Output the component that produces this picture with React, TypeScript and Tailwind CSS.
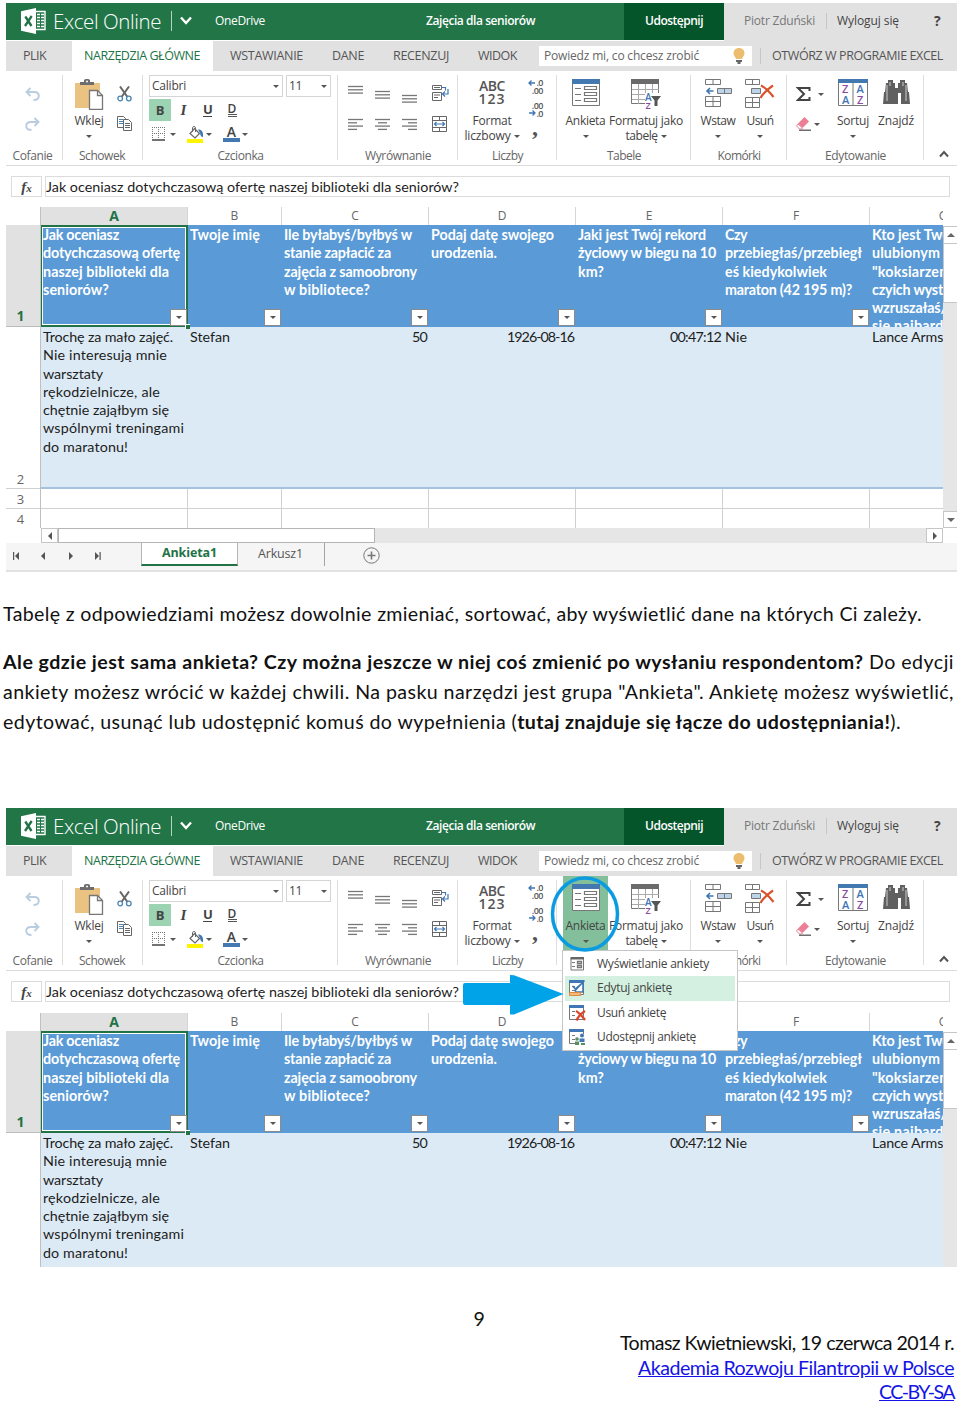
import { useLayoutEffect, useRef, useState, type ReactNode } from "react";
import { clsx } from "clsx";

interface FitProps {
  w: number;
  className?: string;
  children: ReactNode;
}

// Tracks the text so that it takes up exactly w pixels
function Fit({ w, className, children }: FitProps) {
  const ref = useRef<HTMLSpanElement>(null);
  const [spacing, setSpacing] = useState(0);

  useLayoutEffect(() => {
    const el = ref.current;
    if (!el) return;
    el.style.letterSpacing = "0px";
    const natural = el.getBoundingClientRect().width;
    const next = (w - natural) / (el.textContent?.length || 1);
    el.style.letterSpacing = `${next}px`;
    setSpacing(next);
  }, [w]);

  return (
    <span
      ref={ref}
      className={clsx("inline-block shrink-0 whitespace-nowrap", className)}
      style={{ letterSpacing: `${spacing}px` }}
    >
      {children}
    </span>
  );
}

function Caret({ className }: { className?: string }) {
  return (
    <svg className={clsx("h-[3px] w-[6px] shrink-0", className)} viewBox="0 0 6 3" fill="#555">
      <path d="M0 0h6L3 3z" />
    </svg>
  );
}

/* ---------- icons ---------- */

function ExcelLogo() {
  return (
    <svg className="h-[26px] w-[25px] shrink-0" viewBox="0 0 25 26">
      <path d="M0 3.2 15 0v26L0 22.8z" fill="#fff" />
      <path d="M15 3.500h9v18h-9" fill="none" stroke="#fff" strokeWidth="1.4" />
      <path d="M16 6.500h7M16 9.500h7M16 12.500h7M16 15.500h7M16 18.500h7" stroke="#fff" strokeWidth="1.7" strokeDasharray="3 1" />
      <path d="M4.300 8.500 10.500 18M10.700 8 4 18" stroke="#217346" strokeWidth="2.300" />
    </svg>
  );
}

function UndoIcon({ flip }: { flip?: boolean }) {
  return (
    <svg className={clsx("h-[14px] w-[15px]", flip && "-scale-x-100")} viewBox="0 0 15 14" fill="none" stroke="#b9cde0" strokeWidth="1.9">
      <path d="M5.500 1 1.500 5l4 4M1.500 5H9c3 0 4.800 1.500 4.800 4S12 13 8.500 13" />
    </svg>
  );
}

function PasteIcon() {
  return (
    <svg className="h-[31px] w-[29px]" viewBox="0 0 29 31">
      <path d="M0 4h25v25H0z" fill="#eac282" />
      <path d="M5 6V3h4V1.500C9 .5 10 0 12 0s3 .5 3 1.500V3h4v3z" fill="#6d6d6d" />
      <circle cx="12" cy="2.500" r="1" fill="#fff" />
      <path d="M14.500 11.500h8l5 5v14h-13z" fill="#fff" stroke="#777" strokeWidth="1.300" />
      <path d="M22.500 11.500v5h5" fill="none" stroke="#777" strokeWidth="1.300" />
    </svg>
  );
}

function CutIcon() {
  return (
    <svg className="h-[16px] w-[15px]" viewBox="0 0 15 16" fill="none">
      <path d="M3 .5 10.500 11M12 .5 4.500 11" stroke="#666" strokeWidth="2" />
      <circle cx="3.200" cy="12.500" r="2.300" stroke="#4a86b5" strokeWidth="1.300" />
      <circle cx="11.800" cy="12.500" r="2.300" stroke="#4a86b5" strokeWidth="1.300" />
    </svg>
  );
}

function CopyIcon() {
  return (
    <svg className="h-[15px] w-[15px]" viewBox="0 0 15 15" fill="#fff" stroke="#666">
      <path d="M.5.5h6l2 2v9h-8z" />
      <path d="M2 3.500h4M2 5.500h4M2 7.500h4" stroke="#4a86b5" />
      <path d="M6.500 3.500h5l3 3v8h-8z" />
      <path d="M8 7.500h5M8 9.500h5M8 11.500h5" stroke="#666" />
    </svg>
  );
}

function BordersIcon() {
  return (
    <svg className="h-[14px] w-[14px]" viewBox="0 0 14 14" fill="none" stroke="#777">
      <path d="M.5 0v12M6.500 0v12M12.500 0v12M0 .5h13M0 6.500h13" strokeDasharray="1 1" />
      <path d="M0 13h13" stroke="#444" strokeWidth="1.500" />
    </svg>
  );
}

function FillIcon() {
  return (
    <svg className="h-[17px] w-[17px]" viewBox="0 0 17 17" fill="none">
      <path d="M7.500 2.500 12.500 7.500 8 12 3 7.500z" fill="#fff" stroke="#666" strokeWidth="1.200" />
      <path d="M5.500 6V1.500C5.500.3 8.500.3 8.500 1.500V6" stroke="#666" />
      <path d="M11 3.500c4 0 5.500 2.500 5 7.500-2 0-2.500-1.500-3-4z" fill="#3f76b3" />
      <path d="M0 13h16v4H0z" fill="#fdf500" />
    </svg>
  );
}

function AlignIcon({ rows, className }: { rows: [number, number][]; className?: string }) {
  return (
    <svg className={clsx("h-[13px] w-[15px]", className)} viewBox="0 0 15 13" stroke="#777" strokeWidth="1.300">
      {rows.map(([from, to], i) => (
        <path key={i} d={`M${from} ${i * 3.3 + 1.5}H${to}`} />
      ))}
    </svg>
  );
}

function WrapIcon() {
  return (
    <svg className="h-[16px] w-[17px]" viewBox="0 0 17 16" fill="none" stroke="#666">
      <path d="M.5.5h9v4h-9zM.5 7.500h9v8h-9zM2 2.500h6M2 10h6M2 12.500h4" />
      <path d="M9.500 2.500h4v3M16 4v5h-5M13 6.500 10.500 9l2.500 2.500" stroke="#3f76b3" strokeWidth="1.200" />
    </svg>
  );
}

function MergeIcon() {
  return (
    <svg className="h-[16px] w-[15px]" viewBox="0 0 15 16" fill="none" stroke="#666">
      <path d="M.5.5h14v15H.5zM.5 4.500h14M.5 11.500h14M7.500.5v4M7.500 11.500v4" />
      <path d="M2.500 8h10M4.500 6l-2 2 2 2M10.500 6l2 2-2 2" stroke="#3f76b3" strokeWidth="1.200" />
    </svg>
  );
}

function DecimalIcon({ less }: { less?: boolean }) {
  return (
    <div className="flex h-[15px] w-[16px] flex-col text-right font-['Open_Sans'] text-[9px] leading-[7px] font-semibold tracking-[-0.5px] text-[#555]">
      <div className="flex h-[7px] items-center justify-end">
        {!less && <BlueArrow />}
        {less ? ".00" : ".0"}
      </div>
      <div className="flex h-[8px] items-center justify-end">
        {less && <BlueArrow flip />}
        {less ? ".0" : ".00"}
      </div>
    </div>
  );
}

function BlueArrow({ flip }: { flip?: boolean }) {
  return (
    <svg className={clsx("h-[6px] w-[8px] shrink-0", flip && "-scale-x-100")} viewBox="0 0 8 6" fill="none" stroke="#3f76b3" strokeWidth="1.300">
      <path d="M1 3h6M3.500.5 1 3l2.500 2.500" />
    </svg>
  );
}

function SurveyIcon() {
  return (
    <svg className="h-[27px] w-[28px]" viewBox="0 0 28 27" fill="none" stroke="#777">
      <path d="M.5.5h27v26H.5z" fill="#fff" />
      <path d="M0 0h28v5H0z" fill="#4478b0" stroke="none" />
      <path d="M3 9.500h6M3 15.500h6M3 21.500h6" />
      <path d="M12.500 7.500h12v3h-12zM12.500 13.500h12v3h-12zM12.500 19.500h12v3h-12z" strokeWidth="1.200" />
    </svg>
  );
}

function FormatTableIcon() {
  return (
    <svg className="h-[30px] w-[31px]" viewBox="0 0 31 30" fill="none">
      <path d="M.5.5h27v24H.5z" fill="#fff" stroke="#777" />
      <path d="M0 0h28v5H0z" fill="#6b6b6b" />
      <path d="M7.500 5v20M14.500 5v9M21.500 5v9M1 10.500h27M1 15.500h13M1 20.500h13" stroke="#aaa" />
      <path d="M14 14h17v16H14z" fill="#fff" />
      <path d="M20 17h10l-3.500 4.500V27h-3v-5.500z" fill="#555" />
      <text x="14" y="22" className="font-['Open_Sans'] text-[10px] font-semibold" fill="#3f76b3">A</text>
      <text x="14.500" y="30" className="font-['Open_Sans'] text-[9px] font-semibold" fill="#8a4aa0">Z</text>
    </svg>
  );
}

function InsertIcon() {
  return (
    <svg className="h-[29px] w-[27px]" viewBox="0 0 27 29" fill="none" stroke="#777">
      <path d="M.5.5h15v5H.5zM8 .5v5M.5 17.500h15v10H.5zM8 17.500v10M.5 22.500h15" />
      <path d="M12.500 9.500h14v5h-14zM19.500 9.500v5" fill="#bdd3ea" />
      <path d="M1.500 12h7M5 9l-3 3 3 3" stroke="#3f76b3" strokeWidth="1.600" />
    </svg>
  );
}

function DeleteIcon() {
  return (
    <svg className="h-[29px] w-[30px]" viewBox="0 0 30 29" fill="none" stroke="#777">
      <path d="M.5.500h14v5H.5zM7.500.5v5M.5 18.500h14v10H.5zM7.500 18.500v10M.5 23.500h14" />
      <path d="M6.500 9.500h9v5h-9z" fill="#bdd3ea" />
      <path d="M16 6.500c4 2 9 7 12.500 11.500M28 6.500C23 10 18 14 15.500 19" stroke="#d9532c" strokeWidth="2.200" />
    </svg>
  );
}

function EraserIcon() {
  return (
    <svg className="h-[14px] w-[15px]" viewBox="0 0 15 14">
      <path d="M8.500 0 13 4.500 6.500 11 2 6.500z" fill="#ec7f95" />
      <path d="M2 7 .5 9l3 3h2l1-1z" fill="#fff" stroke="#ec7f95" />
      <path d="M3 13.200h12" stroke="#555" strokeWidth="1.300" />
    </svg>
  );
}

function SortIcon() {
  return (
    <svg className="h-[27px] w-[30px]" viewBox="0 0 30 27">
      <path d="M.5.5h29v26H.5zM15 3v24" fill="#fff" stroke="#777" />
      <path d="M0 0h30v4H0z" fill="#4478b0" />
      <g className="font-['Open_Sans'] text-[11px] font-semibold">
        <text x="4" y="14" fill="#8a4aa0">Z</text>
        <text x="4" y="24.500" fill="#3f76b3">A</text>
        <text x="18.500" y="14" fill="#3f76b3">A</text>
        <text x="19" y="24.500" fill="#8a4aa0">Z</text>
      </g>
    </svg>
  );
}

function FindIcon() {
  return (
    <svg className="h-[25px] w-[27px]" viewBox="0 0 27 25" fill="#606060">
      <path d="M5 0h5v3h2v5h3V3h2V0h5v3h2l1 9h1l1 12h-9V13h-3v11H0l1-12h1l1-9h2z" />
      <path d="M4 5v16M23 5v16M7 2v4M20 2v4" stroke="#fff" strokeWidth=".7" />
    </svg>
  );
}

function BulbIcon() {
  return (
    <svg className="h-[16px] w-[12px]" viewBox="0 0 12 16">
      <path d="M6 0c3.300 0 5.500 2.300 5.500 5.300 0 2.700-2 3.700-2.500 5.700H3C2.500 9 .5 8 .5 5.300.5 2.300 2.700 0 6 0z" fill="#ecbd6d" />
      <path d="M3 12h6v2H7.500v2h-3v-2H3z" fill="#666" />
    </svg>
  );
}

function MenuIcon({ kind }: { kind: number }) {
  return (
    <svg className="h-[16px] w-[17px] shrink-0" viewBox="0 0 17 16" fill="none" stroke="#777">
      <path d={kind === 0 ? "M2 2.500h12.500v11.500H2z" : "M.5 2.500h14v12H.5z"} fill="#fff" />
      <path d={kind === 0 ? "M1.500 1h13.500v2.500H1.500z" : "M0 0h15v3H0z"} fill={kind === 0 ? "#666" : "#3f76b3"} stroke="none" />
      <path d="M3 6.500h3M3 10.500h3" />
      {kind === 0 && <path d="M8.500 5.500h4v2h-4zM8.500 9.500h4v2h-4z" strokeWidth="1.300" />}
      {kind === 1 && (
        <>
          <path d="M3.500 6 7 9.500 15.500.5M6 11.500l1-3 7-6v9.500H6" stroke="#3f76b3" strokeWidth="1.600" />
          <path d="M.5 12.500h11v3H.5z" fill="#f3b880" stroke="#e08a3c" />
        </>
      )}
      {kind === 2 && <path d="M7 6c3 1.500 6 5 9 9M16 6c-4 2.500-7 5.500-8.500 9.500" stroke="#d9472c" strokeWidth="2.300" />}
      {kind === 3 && (
        <>
          <path d="M6.500 5H17v11H6.500z" fill="#fff" stroke="none" />
          <circle cx="13" cy="6.500" r="2" fill="#3f76b3" stroke="none" />
          <path d="M10.500 13V9.500h5V13z" fill="#3f76b3" stroke="none" />
          <circle cx="8" cy="10" r="1.800" fill="#55905f" stroke="none" />
          <path d="M6 12.500h4V16H6zM12 14h4v2h-4z" fill="#55905f" stroke="none" />
        </>
      )}
    </svg>
  );
}

/* ---------- ribbon ---------- */

function Group({ label, labelW, className, children }: { label: string; labelW: number; className: string; children: ReactNode }) {
  return (
    <div className={clsx("flex h-[94px] shrink-0 flex-col", className)}>
      <div className="flex h-[77px] w-full">
        {children}
        <div className="mt-[4px] ml-auto h-[85px] w-px shrink-0 bg-[#dedede]" />
      </div>
      <div className="text-center leading-[16px] text-[#666]">
        <Fit w={labelW}>{label}</Fit>
      </div>
    </div>
  );
}

interface BigButtonProps {
  icon: ReactNode;
  label: string;
  labelW: number;
  second?: string;
  secondW?: number;
  noCaret?: boolean;
  className?: string;
}

function BigButton({ icon, label, labelW, second, secondW, noCaret, className }: BigButtonProps) {
  return (
    <div className={clsx("flex h-[78px] shrink-0 flex-col items-center pt-[8px]", className)}>
      <div className="flex h-[34px] shrink-0 items-start justify-center">{icon}</div>
      <div className="h-[15px] shrink-0 leading-[15px]">
        <Fit w={labelW}>{label}</Fit>
      </div>
      <div className="flex h-[15px] shrink-0 items-center gap-[3px] leading-[15px]">
        {second && <Fit w={secondW ?? 0}>{second}</Fit>}
        {!noCaret && <Caret className="mt-px" />}
      </div>
    </div>
  );
}

function Ribbon({ open }: { open?: boolean }) {
  return (
    <div className="flex h-[95px] border-b border-[#dcdcdc] text-[#444]">
      <Group label="Cofanie" labelW={40} className="w-[57px] [&>div:last-child]:pr-[4px]">
        <div className="flex flex-col gap-[16px] pt-[16px] pl-[19px]">
          <UndoIcon />
          <UndoIcon flip />
        </div>
      </Group>
      <Group label="Schowek" labelW={46} className="w-[80px] [&>div:last-child]:pr-[2px]">
        <BigButton icon={<PasteIcon />} label="Wklej" labelW={29} className="w-[52px]" />
        <div className="flex flex-col gap-[14px] pt-[15px] pl-[2px]">
          <CutIcon />
          <CopyIcon />
        </div>
      </Group>
      <Group label="Czcionka" labelW={46} className="w-[195px]">
        <div className="flex flex-col pt-[4px] pl-[6px]">
          <div className="flex gap-[3px]">
            <div className="flex h-[22px] w-[134px] items-center justify-between border border-[#d5d5d5] pr-[3px] pl-[2px]">
              <Fit w={34}>Calibri</Fit>
              <Caret />
            </div>
            <div className="flex h-[22px] w-[45px] items-center justify-between border border-[#d5d5d5] pr-[3px] pl-[2px]">
              <Fit w={13}>11</Fit>
              <Caret />
            </div>
          </div>
          <div className="mt-[2px] flex h-[22px] items-center text-[13px] leading-[18px] font-bold text-[#444]">
            <div className="flex h-[22px] w-[22px] items-center justify-center bg-[#9bd3b3]">B</div>
            <div className="w-[25px] text-center font-['Liberation_Serif'] text-[15px] italic">I</div>
            <div className="flex w-[23px] justify-center">
              <span className="h-[14px] w-[9px] border-b border-[#444] text-center leading-[13px]">U</span>
            </div>
            <div className="flex w-[26px] justify-center">
              <span className="h-[14px] w-[9px] border-b-3 border-double border-[#555] text-center text-[12px] leading-[11px] font-semibold">D</span>
            </div>
          </div>
          <div className="mt-[3px] flex h-[20px] items-center pl-[3px]">
            <BordersIcon />
            <Caret className="ml-[4px]" />
            <div className="ml-[11px]">
              <FillIcon />
            </div>
            <Caret className="ml-[2px]" />
            <div className="ml-[11px] flex w-[17px] flex-col items-center">
              <span className="text-[14px] leading-[12px] font-semibold">A</span>
              <div className="h-[4px] w-full bg-[#4478b0]" />
            </div>
            <Caret className="ml-[2px]" />
          </div>
        </div>
      </Group>
      <Group label="Wyrównanie" labelW={66} className="w-[120px]">
        <div className="grid h-[66px] grid-cols-[27px_27px_30px_17px] grid-rows-[31px_31px] pt-[14px] pl-[10px]">
          <AlignIcon rows={[[0, 15], [0, 15], [0, 15]]} />
          <AlignIcon rows={[[0, 15], [0, 15], [0, 15]]} className="mt-[5px]" />
          <AlignIcon rows={[[0, 15], [0, 15], [0, 15]]} className="mt-[9px]" />
          <WrapIcon />
          <AlignIcon rows={[[0, 15], [0, 9], [0, 15], [0, 9]]} className="mt-[2px]" />
          <AlignIcon rows={[[0, 15], [3, 12], [0, 15], [3, 12]]} className="mt-[2px]" />
          <AlignIcon rows={[[0, 15], [6, 15], [0, 15], [6, 15]]} className="mt-[2px]" />
          <MergeIcon />
        </div>
      </Group>
      <Group label="Liczby" labelW={31} className="w-[99px]">
        <BigButton
          icon={
            <div className="flex flex-col items-center pt-px text-[14px] leading-[12.500px] font-semibold text-[#555]">
              <Fit w={26}>ABC</Fit>
              <Fit w={27}>123</Fit>
            </div>
          }
          label="Format"
          labelW={39}
          second="liczbowy"
          secondW={46}
          className="w-[68px]"
        />
        <div className="flex flex-col items-center pt-[8px] pl-[1px]">
          <DecimalIcon />
          <div className="mt-[8px]">
            <DecimalIcon less />
          </div>
          <div className="mt-[-1px] font-['Liberation_Serif'] text-[24px] leading-[22px] font-bold text-[#555]">,</div>
        </div>
      </Group>
      <Group label="Tabele" labelW={34} className="w-[134px]">
        <BigButton
          icon={<SurveyIcon />}
          label="Ankieta"
          labelW={40}
          className={clsx("ml-[6px] w-[45px]", open && "bg-[#84bf9c]")}
        />
        <BigButton icon={<FormatTableIcon />} label="Formatuj jako" labelW={74} second="tabelę" secondW={32} className="w-[76px]" />
      </Group>
      <Group label="Komórki" labelW={43} className="w-[96px]">
        <BigButton icon={<InsertIcon />} label="Wstaw" labelW={35} className="ml-[7px] w-[40px]" />
        <BigButton icon={<DeleteIcon />} label="Usuń" labelW={27} className="ml-[3px] w-[38px]" />
      </Group>
      <Group label="Edytowanie" labelW={61} className="w-[137px]">
        <div className="flex flex-col pt-[13px] pl-[9px]">
          <div className="flex h-[20px] items-center gap-[7px]">
            <svg className="h-[14px] w-[15px]" viewBox="0 0 15 14" fill="none" stroke="#444" strokeWidth="2">
              <path d="M13.500 4V1H2l6 6-6 6h11.500v-3" />
            </svg>
            <Caret />
          </div>
          <div className="mt-[10px] flex h-[20px] items-center gap-[3px]">
            <EraserIcon />
            <Caret />
          </div>
        </div>
        <BigButton icon={<SortIcon />} label="Sortuj" labelW={32} className="ml-[7px] w-[44px]" />
        <BigButton icon={<div className="pt-px"><FindIcon /></div>} label="Znajdź" labelW={36} noCaret className="w-[42px]" />
      </Group>
      <svg className="mt-[79px] ml-[15px] h-[8px] w-[10px]" viewBox="0 0 10 8" fill="none" stroke="#555" strokeWidth="2">
        <path d="M1 6.500 5 2l4 4.500" />
      </svg>
    </div>
  );
}

function TopBars() {
  return (
    <>
      <div className="flex h-[38px] bg-[#e1e1e1]">
        <div className="flex h-full w-[718px] items-center border-b border-white bg-[#217547] pb-[2px] text-white">
          <div className="ml-[15px]">
            <ExcelLogo />
          </div>
          <Fit w={108} className="ml-[7px] text-[20.500px] leading-[36px] font-light">Excel Online</Fit>
          <div className="ml-[10px] h-[20px] w-px bg-[#b5d3c2]" />
          <svg className="ml-[8px] h-[9px] w-[12px]" viewBox="0 0 12 9" fill="none" stroke="#fff" strokeWidth="2.400">
            <path d="M1 1.500 6 7l5-5.500" />
          </svg>
          <Fit w={50} className="ml-[23px]">OneDrive</Fit>
          <Fit w={109} className="ml-[161px] font-semibold">Zajęcia dla seniorów</Fit>
          <div className="-mb-[2px] ml-auto flex h-[37px] w-[100px] items-center justify-center bg-[#05552b] pb-[2px]">
            <Fit w={58} className="font-semibold">Udostępnij</Fit>
          </div>
        </div>
        <div className="flex flex-1 items-center pb-[3px] text-[#444]">
          <Fit w={71} className="ml-[20px] text-[#777]">Piotr Zduński</Fit>
          <div className="ml-[11px] h-[16px] w-px bg-[#c6c6c6]" />
          <Fit w={62} className="ml-[10px]">Wyloguj się</Fit>
          <span className="ml-[35px] text-[14px] font-bold">?</span>
        </div>
      </div>
      <div className="flex h-[30px] items-center bg-[#e1e1e1] text-[12.500px] text-[#555]">
        <div className="w-[66px] pl-[17px]">
          <Fit w={23}>PLIK</Fit>
        </div>
        <div className="flex h-full w-[141px] items-center bg-white pl-[12px] text-[#217346]">
          <Fit w={116}>NARZĘDZIA GŁÓWNE</Fit>
        </div>
        <Fit w={73} className="ml-[17px]">WSTAWIANIE</Fit>
        <Fit w={32} className="ml-[29px]">DANE</Fit>
        <Fit w={56} className="ml-[29px]">RECENZUJ</Fit>
        <Fit w={39} className="ml-[29px]">WIDOK</Fit>
        <div className="ml-[22px] flex h-[20px] w-[213px] items-center justify-between bg-white pr-[7px] pl-[5px] text-[12px] text-[#666]">
          <Fit w={155}>Powiedz mi, co chcesz zrobić</Fit>
          <BulbIcon />
        </div>
        <div className="ml-[8px] h-[16px] w-px bg-[#c6c6c6]" />
        <Fit w={171} className="ml-[11px]">OTWÓRZ W PROGRAMIE EXCEL</Fit>
      </div>
    </>
  );
}

/* ---------- grid ---------- */

type Line = [string, number];

interface Column {
  letter: string;
  width: string;
  head: Line[];
}

const COLUMNS: Column[] = [
  { letter: "A", width: "w-[147px]", head: [["Jak oceniasz", 76], ["dotychczasową ofertę", 137], ["naszej biblioteki dla", 126], ["seniorów?", 66]] },
  { letter: "B", width: "w-[94px]", head: [["Twoje imię", 70]] },
  { letter: "C", width: "w-[147px]", head: [["Ile byłabyś/byłbyś w", 128], ["stanie zapłacić za", 107], ["zajęcia z samoobrony", 133], ["w bibliotece?", 86]] },
  { letter: "D", width: "w-[147px]", head: [["Podaj datę swojego", 123], ["urodzenia.", 66]] },
  { letter: "E", width: "w-[147px]", head: [["Jaki jest Twój rekord", 128], ["życiowy w biegu na 10", 138], ["km?", 26]] },
  { letter: "F", width: "w-[147px]", head: [["Czy", 22], ["przebiegłaś/przebiegł", 137], ["eś kiedykolwiek", 102], ["maraton (42 195 m)?", 127]] },
  { letter: "G", width: "w-[147px]", head: [["Kto jest Twoim", 94], ["ulubionym", 68], ["\"koksiarzem\",", 87], ["czyich występach", 108], ["wzruszałaś/eś", 88], ["się najbardziej?", 101]] },
];

const ANSWER: Line[] = [
  ["Trochę za mało zajęć.", 130],
  ["Nie interesują mnie", 124],
  ["warsztaty", 60],
  ["rękodzielnicze, ale", 117],
  ["chętnie zająłbym się", 126],
  ["wspólnymi treningami", 141],
  ["do maratonu!", 85],
];

function FilterButton() {
  return (
    <div className="absolute right-[1px] bottom-[1px] flex h-[17px] w-[17px] items-center justify-center border border-[#8b8b8b] bg-white">
      <Caret />
    </div>
  );
}

function Grid({ short }: { short?: boolean }) {
  return (
    <div className="flex">
      {/* Row numbers */}
      <div className="w-[35px] shrink-0 border-r border-[#c0c0c0] pt-[18px] text-center text-[13px] text-[#666]">
        <div className="flex h-[102px] items-end justify-center border-b border-[#bbb] bg-[#e1e1e1] pr-[5px] text-[14px] font-bold text-[#217346]">1</div>
        {!short && (
          <>
            <div className="flex h-[162px] items-end justify-center border-b border-[#d0d0d0] pr-[5px] leading-[17px]">2</div>
            <div className="h-[20px] border-b border-[#d0d0d0] pr-[5px] leading-[21px]">3</div>
            <div className="h-[19px] pr-[5px] leading-[21px]">4</div>
          </>
        )}
      </div>

      {/* Cells */}
      <div className="relative w-[902px] shrink-0 overflow-hidden font-['Lato']">
        <div className="flex h-[18px] w-[976px] text-center font-['Open_Sans'] text-[12px] leading-[17px] text-[#666]">
          {COLUMNS.map((c) => (
            <div
              key={c.letter}
              className={clsx("shrink-0 border-r border-[#d5d5d5]", c.width, c.letter === "A" && "bg-[#e1e1e1] text-[14px] font-bold text-[#217346]")}
            >
              {c.letter}
            </div>
          ))}
        </div>
        <div className="flex h-[102px] w-[976px] text-[14.300px] leading-[18.300px] font-bold text-white">
          {COLUMNS.map((c) => (
            <div key={c.letter} className={clsx("relative h-[102px] shrink-0 overflow-hidden bg-[#5a9ad6] pt-[1px] pl-[2px]", c.width)}>
              {c.letter === "A" && (
                <div className="absolute inset-0 border-2 border-l border-[#217346]">
                  <div className="h-full w-full border border-white" />
                </div>
              )}
              {c.head.map(([text, w]) => (
                <div key={text} className="relative h-[18.300px]">
                  <Fit w={w}>{text}</Fit>
                </div>
              ))}
              {c.letter !== "G" && <FilterButton />}
            </div>
          ))}
        </div>
        {/* Fill handle of the selected cell */}
        <div className="absolute top-[117px] left-[144px] h-[5px] w-[5px] border-t border-l border-white bg-[#217346]" />
        <div
          className={clsx(
            "flex w-[976px] bg-[#dceaf5] pt-[1px] text-[14.300px] leading-[18.300px] text-[#1d1d1d]",
            short ? "h-[134px]" : "h-[162px] border-b-2 border-[#a5c3de]"
          )}
        >
          <div className="w-[147px] shrink-0 pl-[2px]">
            {ANSWER.map(([text, w]) => (
              <div key={text} className="h-[18.300px]">
                <Fit w={w}>{text}</Fit>
              </div>
            ))}
          </div>
          <div className="w-[94px] shrink-0 pl-[2px]"><Fit w={40}>Stefan</Fit></div>
          <div className="w-[147px] shrink-0 pr-[2px] text-right"><Fit w={15}>50</Fit></div>
          <div className="w-[147px] shrink-0 pr-[2px] text-right"><Fit w={67}>1926-08-16</Fit></div>
          <div className="w-[147px] shrink-0 pr-[2px] text-right"><Fit w={51}>00:47:12</Fit></div>
          <div className="w-[147px] shrink-0 pl-[2px]"><Fit w={22}>Nie</Fit></div>
          <div className="w-[147px] shrink-0 pl-[2px]"><Fit w={104}>Lance Armstrong</Fit></div>
        </div>
        {!short &&
          ["h-[20px] border-b border-[#d0d0d0]", "h-[19px]"].map((row) => (
            <div key={row} className={clsx("flex w-[976px]", row)}>
              {COLUMNS.map((c) => (
                <div key={c.letter} className={clsx("shrink-0 border-r border-[#d0d0d0]", c.width)} />
              ))}
            </div>
          ))}
      </div>

      {/* Vertical scrollbar */}
      <div className="flex flex-1 flex-col pt-[19px]">
        <div className="flex h-[18px] items-center justify-center border border-r-0 border-[#c6c6c6]">
          <svg className="h-[4px] w-[8px]" viewBox="0 0 8 4" fill="#666"><path d="M0 4h8L4 0z" /></svg>
        </div>
        <div className="h-[58px] border-l border-[#c6c6c6]" />
        <div className="flex-1 border-t border-[#c6c6c6] bg-[#e6e6e6]" />
        {!short && (
          <div className="flex h-[17px] items-center justify-center border border-r-0 border-[#c6c6c6]">
            <svg className="h-[4px] w-[8px]" viewBox="0 0 8 4" fill="#666"><path d="M0 0h8L4 4z" /></svg>
          </div>
        )}
      </div>
    </div>
  );
}

function SheetTabs() {
  return (
    <>
      <div className="flex h-[15px] pl-[35px]">
        <div className="flex w-[902px] justify-between bg-[#e6e6e6]">
          <div className="flex">
            <div className="flex w-[17px] items-center justify-center border border-[#c6c6c6] bg-white">
              <svg className="h-[8px] w-[4px]" viewBox="0 0 4 8" fill="#555"><path d="M4 0v8L0 4z" /></svg>
            </div>
            <div className="w-[317px] border border-[#b5b5b5] bg-white" />
          </div>
          <div className="flex w-[17px] items-center justify-center border border-[#c6c6c6] bg-white">
            <svg className="h-[8px] w-[4px]" viewBox="0 0 4 8" fill="#555"><path d="M0 0v8l4-4z" /></svg>
          </div>
        </div>
      </div>
      <div className="flex h-[29px] border-b-2 border-[#e2e2e2] bg-[#f5f5f5]">
        <svg className="mt-[9px] ml-[6px] h-[8px] w-[90px]" viewBox="0 0 90 8" fill="#555">
          <path d="M1 0h1.200v8H1zM7 0v8L3 4zM33 0v8l-4-4zM57 0v8l4-4zM83 0v8l4-4zM87.500 0h1.200v8h-1.200z" />
        </svg>
        <div className="ml-[39px] flex h-[23px] w-[97px] items-center justify-center border-x border-b-2 border-x-[#b5b5b5] border-b-[#217346] bg-white text-[12.500px] font-bold text-[#217346]">
          <Fit w={55}>Ankieta1</Fit>
        </div>
        <div className="flex h-[23px] w-[87px] items-center border-r border-[#a5a5a5] pl-[20px] text-[12.500px] text-[#555]">
          <Fit w={45}>Arkusz1</Fit>
        </div>
        <svg className="mt-[4px] ml-[38px] h-[17px] w-[17px]" viewBox="0 0 17 17" fill="none" stroke="#777">
          <circle cx="8.500" cy="8.500" r="7.700" />
          <path d="M4.500 8.500h8M8.500 4.500v8" strokeWidth="1.600" />
        </svg>
      </div>
    </>
  );
}

const MENU: Line[] = [
  ["Wyświetlanie ankiety", 112],
  ["Edytuj ankietę", 75],
  ["Usuń ankietę", 69],
  ["Udostępnij ankietę", 99],
];

function SurveyMenu() {
  return (
    <>
      <div className="absolute top-[142px] left-[556px] h-[101px] w-[176px] border border-[#c6c6c6] bg-white px-[2px] pt-[1px]">
        {MENU.map(([text, w], i) => (
          <div key={text} className={clsx("flex h-[24.300px] items-center gap-[11px] pl-[4px] text-[#444]", i === 1 && "bg-[#d3f0e0]")}>
            <MenuIcon kind={i} />
            <Fit w={w}>{text}</Fit>
          </div>
        ))}
      </div>
      <svg className="absolute top-[68px] left-[544px] h-[77px] w-[70px]" viewBox="0 0 70 77" fill="none">
        <ellipse cx="35" cy="38" rx="32.500" ry="36" stroke="#0b9be0" strokeWidth="3.500" />
      </svg>
      <svg className="absolute top-[167px] left-[457px] h-[40px] w-[101px]" viewBox="0 0 101 40" fill="#00a2e8">
        <path d="M2 8h45V0l4 .3L100.500 19 51 39.500h-4V30H2a2 2 0 0 1-2-2V10a2 2 0 0 1 2-2z" />
      </svg>
    </>
  );
}

function ExcelWindow({ menu }: { menu?: boolean }) {
  return (
    <div className="relative ml-[6px] w-[951px] font-['Open_Sans'] text-[12px]">
      <TopBars />
      <Ribbon open={menu} />
      <div className={clsx("flex gap-[3px] pt-[10px] pl-[5px]", menu ? "h-[42px]" : "h-[41px]")}>
        <div className="flex h-[21px] w-[31px] items-center justify-center border border-[#dcdcdc] font-['Liberation_Serif'] text-[15px] leading-[18px] font-bold text-[#444] italic">
          f<span className="pt-[3px] text-[11px]">x</span>
        </div>
        <div className="flex h-[21px] w-[905px] items-center border border-[#dcdcdc] font-['Lato'] text-[14.300px] text-[#1d1d1d]">
          <Fit w={413}>Jak oceniasz dotychczasową ofertę naszej biblioteki dla seniorów?</Fit>
        </div>
      </div>
      <Grid short={menu} />
      {!menu && <SheetTabs />}
      {menu && <SurveyMenu />}
    </div>
  );
}

export default function App() {
  return (
    <div className="h-[1404px] w-[960px] overflow-hidden bg-white pt-[3px] font-['Lato'] text-[19.600px] text-[#111]">
      <ExcelWindow />

      <div className="flex h-[236px] flex-col pt-[27px] pl-[3px] leading-[30px]">
        <Fit w={919} className="self-start">
          Tabelę z odpowiedziami możesz dowolnie zmieniać, sortować, aby wyświetlić dane na których Ci zależy.
        </Fit>
        <Fit w={951} className="mt-[18px] self-start">
          <b>Ale gdzie jest sama ankieta? Czy można jeszcze w niej coś zmienić po wysłaniu respondentom?</b> Do edycji
        </Fit>
        <Fit w={951} className="self-start">
          ankiety możesz wrócić w każdej chwili. Na pasku narzędzi jest grupa "Ankieta". Ankietę możesz wyświetlić,
        </Fit>
        <Fit w={898} className="self-start">
          edytować, usunąć lub udostępnić komuś do wypełnienia (<b>tutaj znajduje się łącze do udostępniania!</b>).
        </Fit>
      </div>

      <ExcelWindow menu />

      <div className="mt-[39px] text-center leading-[25px]">
        <Fit w={10} className="-ml-[3px]">9</Fit>
      </div>
      <div className="flex flex-col items-end pr-[6px] leading-[24.500px]">
        <Fit w={334}>Tomasz Kwietniewski, 19 czerwca 2014 r.</Fit>
        <Fit w={316} className="text-[#1414e6] underline">Akademia Rozwoju Filantropii w Polsce</Fit>
        <Fit w={75} className="text-[#1414e6] underline">CC-BY-SA</Fit>
      </div>
    </div>
  );
}
